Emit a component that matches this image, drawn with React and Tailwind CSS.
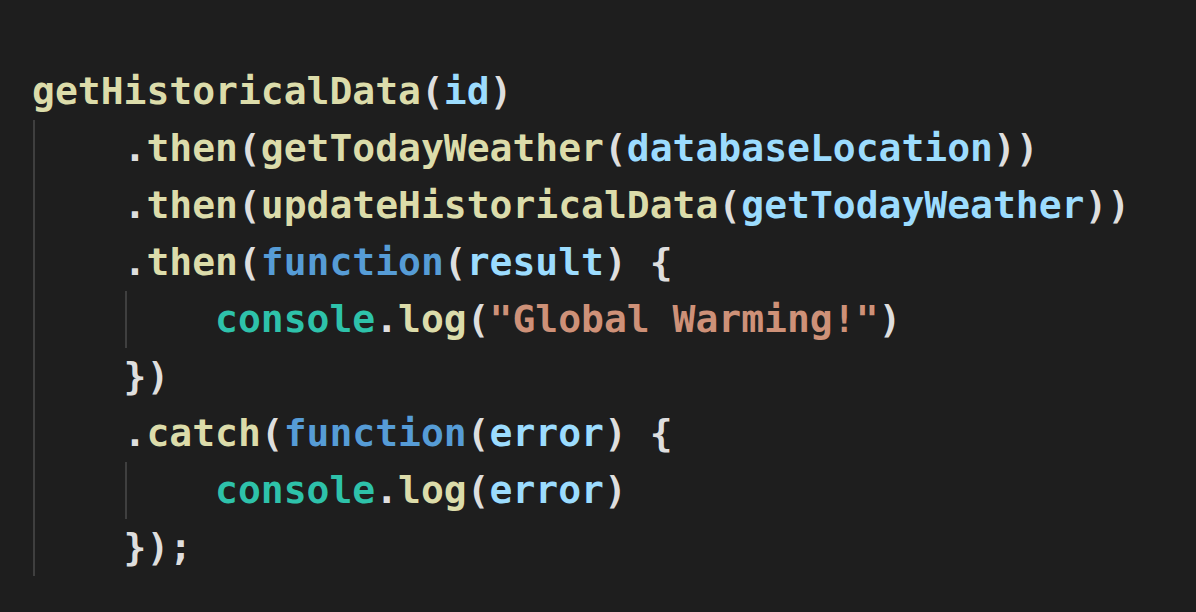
const fn = "text-[#dcdcaa]";
const vr = "text-[#9cdcfe]";
const kw = "text-[#569cd6]";
const cls = "text-[#2ec2aa]";
const str = "text-[#ce9178]";
const pn = "text-[#dedede]";

function Line({ children }) {
  return <div className="whitespace-pre">{children}</div>;
}

function Guide({ children }) {
  return (
    <div className="ml-[1px] border-l-2 border-[#3f3f3f] pl-[calc(4ch-3px)]">
      {children}
    </div>
  );
}

export default function App() {
  return (
    <div
      className="h-[612px] w-[1196px] overflow-hidden bg-[#1e1e1e] pl-[32px] pt-[63px] text-[38px] font-bold leading-[57px]"
      style={{ fontFamily: '"DejaVu Sans Mono", "Liberation Mono", monospace' }}
    >
      <Line>
        <span className={fn}>getHistoricalData</span>
        <span className={pn}>(</span>
        <span className={vr}>id</span>
        <span className={pn}>)</span>
      </Line>
      <Guide>
        <Line>
          <span className={pn}>.</span>
          <span className={fn}>then</span>
          <span className={pn}>(</span>
          <span className={fn}>getTodayWeather</span>
          <span className={pn}>(</span>
          <span className={vr}>databaseLocation</span>
          <span className={pn}>))</span>
        </Line>
        <Line>
          <span className={pn}>.</span>
          <span className={fn}>then</span>
          <span className={pn}>(</span>
          <span className={fn}>updateHistoricalData</span>
          <span className={pn}>(</span>
          <span className={vr}>getTodayWeather</span>
          <span className={pn}>))</span>
        </Line>
        <Line>
          <span className={pn}>.</span>
          <span className={fn}>then</span>
          <span className={pn}>(</span>
          <span className={kw}>function</span>
          <span className={pn}>(</span>
          <span className={vr}>result</span>
          <span className={pn}>) {"{"}</span>
        </Line>
        <Guide>
          <Line>
            <span className={cls}>console</span>
            <span className={pn}>.</span>
            <span className={fn}>log</span>
            <span className={pn}>(</span>
            <span className={str}>"Global Warming!"</span>
            <span className={pn}>)</span>
          </Line>
        </Guide>
        <Line>
          <span className={pn}>{"})"}</span>
        </Line>
        <Line>
          <span className={pn}>.</span>
          <span className={fn}>catch</span>
          <span className={pn}>(</span>
          <span className={kw}>function</span>
          <span className={pn}>(</span>
          <span className={vr}>error</span>
          <span className={pn}>) {"{"}</span>
        </Line>
        <Guide>
          <Line>
            <span className={cls}>console</span>
            <span className={pn}>.</span>
            <span className={fn}>log</span>
            <span className={pn}>(</span>
            <span className={vr}>error</span>
            <span className={pn}>)</span>
          </Line>
        </Guide>
        <Line>
          <span className={pn}>{"});"}</span>
        </Line>
      </Guide>
    </div>
  );
}
